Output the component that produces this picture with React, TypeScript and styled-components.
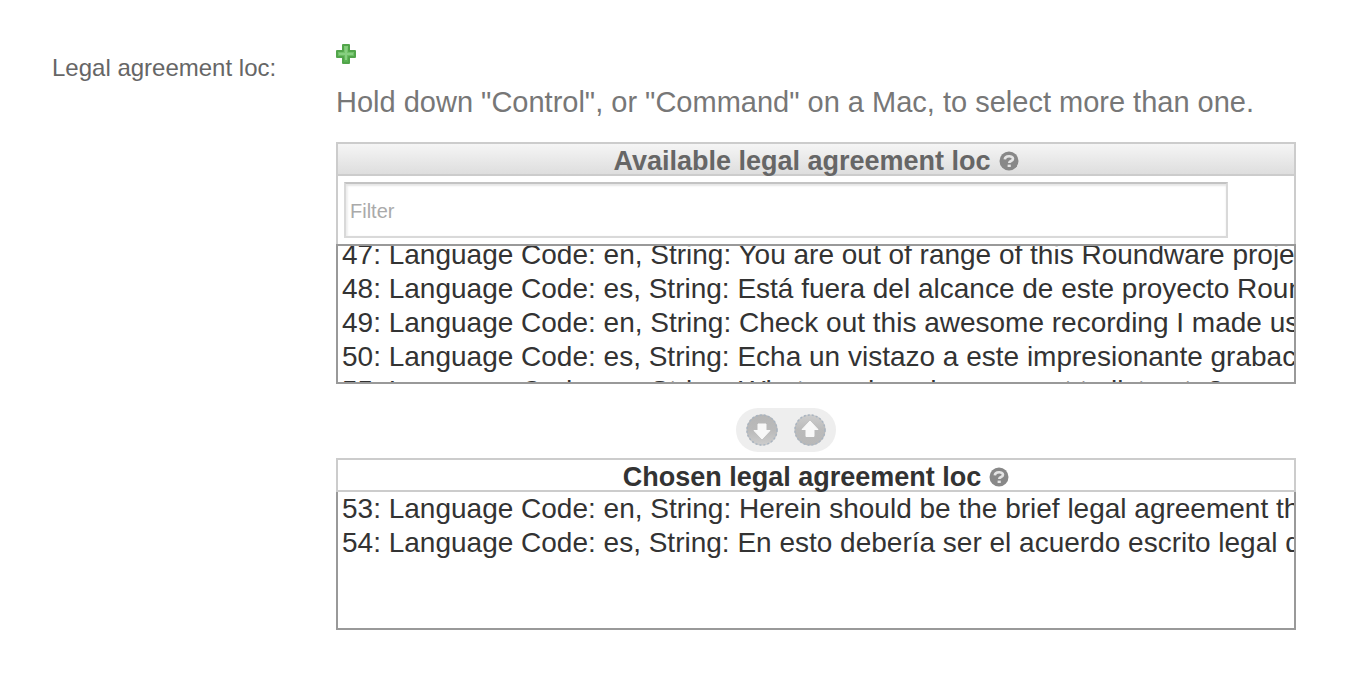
import React, { useLayoutEffect, useRef } from "react";
import styled, { createGlobalStyle } from "styled-components";

const GlobalStyle = createGlobalStyle`
  *, *::before, *::after { box-sizing: border-box; }
  body {
    margin: 0;
    background: #fff;
    color: #333;
    font-family: "Liberation Sans", Arial, Helvetica, sans-serif;
  }
`;

const FormRow = styled.div`
  display: flex;
  padding: 44px 74px 52px 52px;
`;

const FieldLabel = styled.label`
  flex: 0 0 284px;
  padding-top: 10px;
  color: #666;
  font-size: 24px;
  line-height: 28px;
`;

const Field = styled.div`
  flex: 1;
  min-width: 0;
  display: flex;
  flex-direction: column;
`;

const IconButton = styled.button`
  display: block;
  width: 20px;
  height: 20px;
  padding: 0;
  border: 0;
  background: none;
  cursor: pointer;
`;

const HelpText = styled.p`
  margin: 20px 0 22px;
  color: #777;
  font-size: 29px;
  line-height: 36px;
  white-space: nowrap;
`;

const Panel = styled.section`
  display: flex;
  flex-direction: column;
`;

const PanelTitle = styled.h2<{ $shaded?: boolean }>`
  display: flex;
  align-items: center;
  justify-content: center;
  gap: 8px;
  height: 34px;
  margin: 0;
  padding-top: 4px;
  border: 2px solid #ccc;
  background: ${(p) => (p.$shaded ? "linear-gradient(#f5f5f5, #dedede)" : "#fff")};
  color: ${(p) => (p.$shaded ? "#666" : "#333")};
  font-size: 27px;
  line-height: 30px;
`;

const FilterBar = styled.div`
  display: flex;
  padding: 6px;
  border: solid #ccc;
  border-width: 0 2px;
`;

const FilterInput = styled.input`
  width: calc(100% - 60px);
  height: 56px;
  padding: 2px 4px 0;
  border: 2px solid #d9d9d9;
  border-top-color: #c3c3c3;
  border-radius: 0;
  background: #fff;
  box-shadow: inset 0 2px 2px #e6e6e6, inset 2px 0 2px #f2f2f2;
  color: #333;
  font: 20px "Liberation Sans", Arial, sans-serif;
  outline: none;
  &::placeholder { color: #aaa; opacity: 1; }
`;

const ListBox = styled.select<{ $joined?: boolean }>`
  display: block;
  width: 100%;
  height: ${(p) => (p.$joined ? "138px" : "140px")};
  margin: 0;
  padding: ${(p) => (p.$joined ? "1px 0 0" : "0")};
  border: 2px solid #999;
  border-top-width: ${(p) => (p.$joined ? "0" : "2px")};
  border-radius: 0;
  background: #fff;
  color: #333;
  font: 28px "Liberation Sans", Arial, sans-serif;
  overflow-x: hidden;
  overflow-y: auto;
  scrollbar-width: none;
  outline: none;
`;

const Choice = styled.option`
  height: 34px;
  min-height: 34px;
  padding: 0 4px;
  line-height: 34px;
`;

const Transfer = styled.div`
  display: flex;
  align-self: center;
  gap: 16px;
  margin: 24px 60px 6px 0;
  padding: 6px 10px;
  border-radius: 22px;
  background: #eee;
`;

const RoundButton = styled.button`
  width: 32px;
  height: 32px;
  padding: 0;
  border: 0;
  border-radius: 50%;
  background: none;
  cursor: pointer;
  svg { display: block; }
`;

const available = [
  "47: Language Code: en, String: You are out of range of this Roundware project. Please try again later.",
  "48: Language Code: es, String: Está fuera del alcance de este proyecto Roundware.",
  "49: Language Code: en, String: Check out this awesome recording I made using Roundware.",
  "50: Language Code: es, String: Echa un vistazo a este impresionante grabación.",
  "55: Language Code: en, String: What genders do you want to listen to?",
];

const chosen = [
  "53: Language Code: en, String: Herein should be the brief legal agreement that applies.",
  "54: Language Code: es, String: En esto debería ser el acuerdo escrito legal de uso.",
];

const AddIcon = () => (
  <svg width="20" height="20" viewBox="0 0 20 20" aria-hidden="true">
    <defs>
      <linearGradient id="plus" x1="0" y1="0" x2="0" y2="1">
        <stop offset="0" stopColor="#86cf7b" />
        <stop offset="1" stopColor="#55b04e" />
      </linearGradient>
    </defs>
    <path d="M7 1H13V7H19V13H13V19H7V13H1V7H7Z" fill="url(#plus)" stroke="#52a54b" strokeWidth="2" strokeLinejoin="round" />
    <path d="M10 3V16M3 10H17" stroke="#86cf80" strokeWidth="2" />
  </svg>
);

const HelpIcon = () => (
  <svg width="20" height="20" viewBox="0 0 20 20" role="img" aria-label="Help">
    <circle cx="10" cy="10" r="9.5" fill="#888" />
    <path d="M5.8 8.4C6 4.4 14 4.2 14 7.8C14 10.4 10.4 9.6 10.2 12" fill="none" stroke="#e4e4e4" strokeWidth="2.6" />
    <path d="M8.6 13.6H11.8V16H8.6Z" fill="#e4e4e4" />
  </svg>
);

const ArrowIcon = ({ up }: { up?: boolean }) => (
  <svg width="32" height="32" viewBox="0 0 32 32" aria-hidden="true">
    <defs>
      <linearGradient id={up ? "discUp" : "discDown"} x1="0" y1="0" x2="0" y2="1">
        <stop offset="0" stopColor={up ? "#cdcdcd" : "#b6b6b6"} />
        <stop offset="0.5" stopColor="#bababa" />
        <stop offset="1" stopColor={up ? "#b8b8b8" : "#cdcdcd"} />
      </linearGradient>
    </defs>
    <circle cx="16" cy="16" r="15.5" fill={`url(#${up ? "discUp" : "discDown"})`} />
    <circle cx="16" cy="16" r="15" fill="none" stroke="#a9b4c0" strokeWidth="1.5" strokeDasharray="2 2" />
    {up ? (
      <path d="M16 7L24 15.5H20V22.5H12V15.5H8Z" fill="#f8f8f8" stroke="#f8f8f8" strokeLinejoin="round" />
    ) : (
      <path d="M16 25L24 16.5H20V10H12V16.5H8Z" fill="#f8f8f8" stroke="#f8f8f8" strokeLinejoin="round" />
    )}
  </svg>
);

export default function App() {
  const list = useRef<HTMLSelectElement>(null);

  // Opens the list part-way into its first entry.
  useLayoutEffect(() => {
    if (list.current) list.current.scrollTop = 7;
  }, []);

  return (
    <>
      <GlobalStyle />
      <FormRow>
        <FieldLabel htmlFor="chosen">Legal agreement loc:</FieldLabel>
        <Field>
          <IconButton type="button" aria-label="Add another">
            <AddIcon />
          </IconButton>
          <HelpText>Hold down "Control", or "Command" on a Mac, to select more than one.</HelpText>
          <Panel>
            <PanelTitle $shaded>
              Available legal agreement loc <HelpIcon />
            </PanelTitle>
            <FilterBar>
              <FilterInput type="text" placeholder="Filter" aria-label="Filter" />
            </FilterBar>
            <ListBox multiple ref={list} aria-label="Available legal agreement loc">
              {available.map((text) => (
                <Choice key={text}>{text}</Choice>
              ))}
            </ListBox>
          </Panel>
          <Transfer>
            <RoundButton type="button" aria-label="Choose">
              <ArrowIcon />
            </RoundButton>
            <RoundButton type="button" aria-label="Remove">
              <ArrowIcon up />
            </RoundButton>
          </Transfer>
          <Panel>
            <PanelTitle>
              Chosen legal agreement loc <HelpIcon />
            </PanelTitle>
            <ListBox id="chosen" multiple $joined>
              {chosen.map((text) => (
                <Choice key={text}>{text}</Choice>
              ))}
            </ListBox>
          </Panel>
        </Field>
      </FormRow>
    </>
  );
}
